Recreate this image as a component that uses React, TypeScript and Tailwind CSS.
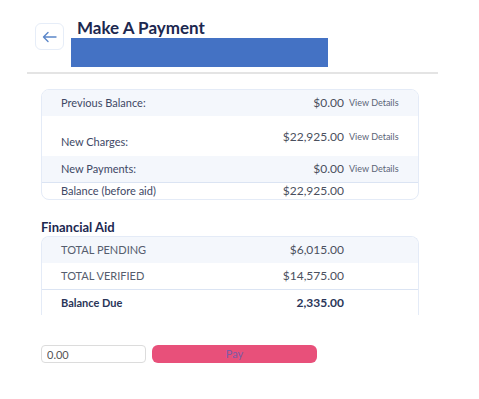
import React from "react";

const charges = [
  { label: "Previous Balance:", value: "$0.00", shaded: true, h: "h-[26px]", align: "center" },
  { label: "New Charges:", value: "$22,925.00", shaded: false, h: "h-[40px]", align: "split" },
  { label: "New Payments:", value: "$0.00", shaded: true, h: "h-[26px]", align: "center" },
];

const aid = [
  { label: "TOTAL PENDING", value: "$6,015.00", shaded: true },
  { label: "TOTAL VERIFIED", value: "$14,575.00", shaded: false },
];

export default function App() {
  return (
    <div className="w-[479px] h-[399px] bg-white overflow-hidden font-['Lato',sans-serif]">
      {/* header */}
      <div className="flex pt-[18px] pl-[35px]">
        <button className="mt-[5px] w-[29px] h-[27px] flex items-center justify-center rounded-md border border-[#e6edf8] bg-white">
          <svg width="15" height="12" viewBox="0 0 15 12" fill="none" stroke="#5b86c9" strokeWidth="1.4" strokeLinecap="round" strokeLinejoin="round">
            <path d="M14 6H1.5M6 1.5L1.5 6L6 10.5" />
          </svg>
        </button>
        <div className="ml-[7px] flex flex-col">
          <h1 className="pl-[6px] text-[17px] leading-[20px] font-bold text-[#1c2850]">Make A Payment</h1>
          <div className="w-[257px] h-[29px] bg-[#4472c4]" />
        </div>
      </div>
      <div className="ml-[27px] mt-[5px] w-[411px] h-[2px] bg-[#e4e4e4]" />

      {/* charges */}
      <div className="ml-[41px] mt-[15px] w-[378px] rounded-lg border border-[#e4ebf7] overflow-hidden">
        {charges.map((r) => (
          <div
            key={r.label}
            className={`flex pl-[19px] pr-[21px] ${r.h} ${r.shaded ? "bg-[#f4f7fc]" : "bg-white"} ${r.align === "center" ? "items-center" : "items-stretch"}`}
          >
            <span className={`flex-1 text-[11px] text-[#3e4865] ${r.align === "split" ? "self-end pb-[6px]" : ""}`}>{r.label}</span>
            <span className={`text-[12px] text-[#4a505e] ${r.align === "split" ? "self-start pt-[12px]" : ""}`}>{r.value}</span>
            <span className={`ml-[5px] w-[48px] whitespace-nowrap text-[9px] text-[#5b6477] ${r.align === "split" ? "self-start pt-[14px]" : ""}`}>View Details</span>
          </div>
        ))}
        <div className="flex items-center h-[17px] pl-[19px] pr-[21px] border-t border-[#dbe4f3]">
          <span className="flex-1 text-[11px] text-[#3e4865]">Balance (before aid)</span>
          <span className="text-[12px] text-[#4a505e]">$22,925.00</span>
          <span className="ml-[5px] w-[48px]" />
        </div>
      </div>

      {/* financial aid */}
      <h2 className="ml-[41px] mt-[18px] text-[13px] leading-[18px] font-bold text-[#1c2850]">Financial Aid</h2>
      <div className="ml-[41px] w-[378px] h-[79px] rounded-t-lg border border-b-0 border-[#e4ebf7] overflow-hidden">
        {aid.map((r) => (
          <div key={r.label} className={`flex items-center h-[26px] pl-[19px] pr-[21px] ${r.shaded ? "bg-[#f4f7fc]" : "bg-white"}`}>
            <span className="flex-1 text-[11px] text-[#555d6e]">{r.label}</span>
            <span className="text-[12px] text-[#4a505e]">{r.value}</span>
            <span className="ml-[5px] w-[48px]" />
          </div>
        ))}
        <div className="flex items-center h-[27px] pl-[19px] pr-[21px] border-t border-[#dbe4f3]">
          <span className="flex-1 text-[11px] font-bold text-[#2a3558]">Balance Due</span>
          <span className="text-[12px] font-bold text-[#2a3558]">2,335.00</span>
          <span className="ml-[5px] w-[48px]" />
        </div>
      </div>

      {/* pay */}
      <div className="flex items-center gap-[6px] ml-[41px] mt-[30px]">
        <input
          defaultValue="0.00"
          className="w-[105px] h-[18px] px-[5px] rounded-[4px] border border-[#dcdcdc] text-[11px] text-[#555] outline-none"
        />
        <button className="w-[165px] h-[18px] rounded-md bg-[#e8507a] text-[11px] text-[#7d5aa6]">Pay</button>
      </div>
    </div>
  );
}
